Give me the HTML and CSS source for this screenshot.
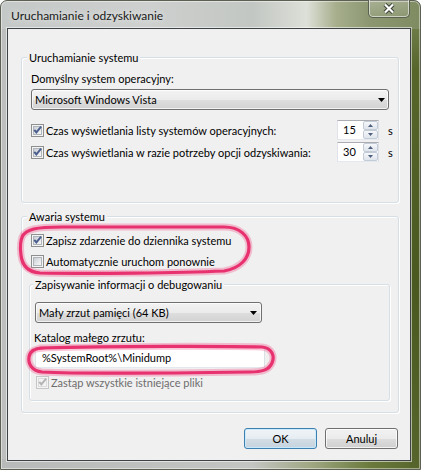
FILE: index.html
```html
<!DOCTYPE html>
<html lang="pl">
<head>
<meta charset="utf-8">
<title>Uruchamianie i odzyskiwanie</title>
<link rel="stylesheet" href="styles.css">
</head>
<body>
<div class="window">
  <div class="titlebar">
    <div class="title">Uruchamianie i odzyskiwanie</div>
    <div class="close">
      <svg width="12" height="11" viewBox="0 0 12 11"><path d="M2 1.5 L10 9.5 M10 1.5 L2 9.5" stroke="#3b4236" stroke-width="4.2"/><path d="M2 1.5 L10 9.5 M10 1.5 L2 9.5" stroke="#ffffff" stroke-width="2.2"/></svg>
    </div>
  </div>
  <div class="client">
    <div class="group g1">
      <div class="gtitle">Uruchamianie systemu</div>
      <div class="label l1">Domyślny system operacyjny:</div>
      <div class="combo c1"><span>Microsoft Windows Vista</span><svg width="7" height="4" viewBox="0 0 7 4"><path d="M0 0H7L3.5 4Z" fill="#000"/></svg></div>
      <div class="row r1">
        <div class="check"><span class="cb"><span class="cb-in"><svg width="9" height="9" viewBox="0 0 9 9"><path d="M0.5 4.6 L2 3.2 L3.4 4.8 L7.4 0 L8.8 1.3 L3.4 8 Z" fill="#4b5f8e"/></svg></span></span><span>Czas wyświetlania listy systemów operacyjnych:</span></div>
        <div class="spin"><span class="spin-val">15</span><span class="spin-btns"><span class="sb"><svg width="5" height="3" viewBox="0 0 5 3"><path d="M0 3L2.5 0L5 3Z" fill="#4f5f7d"/></svg></span><span class="sb"><svg width="5" height="3" viewBox="0 0 5 3"><path d="M0 0H5L2.5 3Z" fill="#4f5f7d"/></svg></span></span></div>
        <span class="unit">s</span>
      </div>
      <div class="row r2">
        <div class="check"><span class="cb"><span class="cb-in"><svg width="9" height="9" viewBox="0 0 9 9"><path d="M0.5 4.6 L2 3.2 L3.4 4.8 L7.4 0 L8.8 1.3 L3.4 8 Z" fill="#4b5f8e"/></svg></span></span><span>Czas wyświetlania w razie potrzeby opcji odzyskiwania:</span></div>
        <div class="spin"><span class="spin-val">30</span><span class="spin-btns"><span class="sb"><svg width="5" height="3" viewBox="0 0 5 3"><path d="M0 3L2.5 0L5 3Z" fill="#4f5f7d"/></svg></span><span class="sb"><svg width="5" height="3" viewBox="0 0 5 3"><path d="M0 0H5L2.5 3Z" fill="#4f5f7d"/></svg></span></span></div>
        <span class="unit">s</span>
      </div>
    </div>

    <div class="group g2">
      <div class="gtitle">Awaria systemu</div>
      <div class="row z1">
        <div class="check"><span class="cb"><span class="cb-in"><svg width="9" height="9" viewBox="0 0 9 9"><path d="M0.5 4.6 L2 3.2 L3.4 4.8 L7.4 0 L8.8 1.3 L3.4 8 Z" fill="#4b5f8e"/></svg></span></span><span>Zapisz zdarzenie do dziennika systemu</span></div>
      </div>
      <div class="row z2">
        <div class="check"><span class="cb"><span class="cb-in"></span></span><span>Automatycznie uruchom ponownie</span></div>
      </div>
      <div class="group g3">
        <div class="gtitle">Zapisywanie informacji o debugowaniu</div>
        <div class="combo c2"><span>Mały zrzut pamięci (64 KB)</span><svg width="7" height="4" viewBox="0 0 7 4"><path d="M0 0H7L3.5 4Z" fill="#000"/></svg></div>
        <div class="label l2">Katalog małego zrzutu:</div>
        <div class="textbox">%SystemRoot%\Minidump</div>
        <div class="row d1">
          <div class="check disabled"><span class="cb"><span class="cb-in"><svg width="9" height="9" viewBox="0 0 9 9"><path d="M0.5 4.6 L2 3.2 L3.4 4.8 L7.4 0 L8.8 1.3 L3.4 8 Z" fill="#b4b4b4"/></svg></span></span><span>Zastąp wszystkie istniejące pliki</span></div>
        </div>
      </div>
    </div>

    <div class="buttons">
      <button class="btn default">OK</button>
      <button class="btn">Anuluj</button>
    </div>
  </div>

  <svg class="marks" width="421" height="470" viewBox="0 0 421 470">
    <g fill="none" stroke-linecap="round" stroke-linejoin="round">
      <path class="glow" d="M22 237 C26 229 36 227 62 227 L224 227 C240 227 249 236 249 247 C249 258 241 268 224 271 C180 273 90 274 40 273 C28 272 22 265 21 255 C20 248 20 241 23 235"/>
      <path class="ink" d="M22 237 C26 229 36 227 62 227 L224 227 C240 227 249 236 249 247 C249 258 241 268 224 271 C180 273 90 274 40 273 C28 272 22 265 21 255 C20 248 20 241 23 235"/>
      <path class="glow" d="M40 348 C120 346 220 346 262 347 C272 348 275 356 272 363 C269 370 262 372 250 372 C180 373 80 374 42 372 C32 371 28 364 29 357 C30 351 34 348 46 348"/>
      <path class="ink" d="M40 348 C120 346 220 346 262 347 C272 348 275 356 272 363 C269 370 262 372 250 372 C180 373 80 374 42 372 C32 371 28 364 29 357 C30 351 34 348 46 348"/>
    </g>
  </svg>
</div>
</body>
</html>
```

FILE: styles.css
```css
html, body {
  margin: 0;
  padding: 0;
  background: #ffffff;
}

body {
  width: 421px;
  height: 470px;
  overflow: hidden;
  font-family: "Lato", "Segoe UI", "Noto Sans", sans-serif;
  font-size: 11px;
  line-height: 15px;
  color: #000;
}

.window {
  position: relative;
  width: 421px;
  height: 470px;
  box-sizing: border-box;
  border: 1px solid #5b6053;
  border-radius: 7px 7px 0 0;
  background:
    linear-gradient(to right, #c4c8c6 0%, #cdd0ce 35%, #c3c7c3 60%, #dde0d8 73%, #a6ae8c 80%, #8c9771 88%, #7f8b61 100%) top / 100% 28px no-repeat,
    linear-gradient(to bottom, #7c8959 0%, #56652a 15%, #4a5920 60%, #56652b 100%) right / 10px 100% no-repeat,
    linear-gradient(to right, #b7bab8 0%, #c2c5c2 60%, #9fa782 74%, #6b7a3c 88%, #56652a 100%) bottom / 100% 10px no-repeat,
    #bcbfbd;
  box-shadow: inset 0 0 0 1px rgba(255, 255, 255, 0.45);
}

.titlebar {
  height: 27px;
  display: flex;
  align-items: flex-start;
}

.title {
  padding: 7px 0 0 10px;
  font-size: 12px;
  color: #1a1a1a;
  text-shadow: 0 0 6px rgba(255, 255, 255, 0.9);
}

.close {
  margin-left: auto;
  margin-right: 10px;
  margin-top: -2px;
  width: 42px;
  height: 19px;
  box-sizing: border-box;
  border: 1px solid #5a6150;
  border-top: none;
  border-radius: 0 0 5px 5px;
  background: linear-gradient(to bottom, rgba(255,255,255,0.25), rgba(255,255,255,0.08));
  box-shadow: inset 0 0 0 1px rgba(255, 255, 255, 0.55);
  display: flex;
  align-items: center;
  justify-content: center;
  padding-top: 1px;
}

.client {
  margin: 0 9px 0 6px;
  height: 433px;
  box-sizing: border-box;
  border: 1px solid #3d4244;
  background: #f0f0f0;
  box-shadow: 0 0 0 1px rgba(255, 255, 255, 0.55);
  padding-top: 28px;
}

.group {
  border: 1px solid #d5dfe5;
  border-radius: 3px;
  box-shadow: inset 1px 1px 0 #ffffff, 1px 1px 0 #ffffff;
}

.gtitle {
  margin-top: -8px;
  width: max-content;
  padding: 0 2px;
  background: #f0f0f0;
  line-height: 15px;
}

.g1 {
  margin: 0 11px 0 13px;
  padding: 0 9px 40px 9px;
}
.g1 > .gtitle { margin-left: -4px; }

.l1 { margin-top: 6px; }

.combo {
  height: 21px;
  box-sizing: border-box;
  border: 1px solid #707070;
  border-radius: 3px;
  background: linear-gradient(to bottom, #f3f3f3 0%, #ebebeb 50%, #dedede 51%, #d2d2d2 100%);
  box-shadow: inset 0 0 0 1px rgba(255,255,255,0.7);
  display: flex;
  align-items: center;
  justify-content: space-between;
  padding: 0 3px 0 3px;
}

.c1 { margin-top: 3px; }

.row {
  height: 20px;
  display: flex;
  align-items: center;
}

.r1 { margin-top: 10px; margin-right: -8px; }
.r2 { margin-top: 2px; margin-right: -8px; }

.check {
  flex: 1;
  display: flex;
  align-items: center;
  gap: 2px;
  white-space: nowrap;
}

.cb {
  width: 13px;
  height: 13px;
  box-sizing: border-box;
  border: 1px solid #8e8f8f;
  background: #f4f4f4;
  padding: 1px;
  flex: none;
}

.cb-in {
  display: block;
  width: 9px;
  height: 9px;
  box-sizing: border-box;
  border: 1px solid #b0b5bb;
  background: linear-gradient(135deg, #c9cdd3 0%, #e6e8ea 60%, #f8f8f8 100%);
}

.cb-in svg {
  display: block;
  margin: -1px 0 0 -1px;
  overflow: visible;
}

.disabled { color: #6d6d6d; }
.disabled .cb { border-color: #c6c6c6; background: #f4f4f4; }
.disabled .cb-in { border-color: #dcdcdc; background: #f4f4f4; }

.spin {
  width: 42px;
  height: 20px;
  box-sizing: border-box;
  border: 1px solid;
  border-color: #abadb3 #dbdfe6 #e3e9ef #e2e3ea;
  background: #fff;
  display: flex;
  flex: none;
}

.spin-val {
  flex: 1;
  padding-left: 5px;
  line-height: 18px;
}

.spin-btns {
  width: 15px;
  display: flex;
  flex-direction: column;
}

.sb {
  flex: 1;
  box-sizing: border-box;
  border: 1px solid #c3cbd6;
  border-radius: 2px;
  background: linear-gradient(to bottom, #f5f7fa, #dfe5ec);
  display: flex;
  align-items: center;
  justify-content: center;
}

.unit {
  width: 9px;
  margin-left: 9px;
  flex: none;
}

.g2 {
  margin: 13px 11px 0 13px;
  padding: 0 8px 11px 7px;
}
.g2 > .gtitle { margin-left: -2px; }

.z1 { margin-top: 6px; margin-left: 2px; }
.z2 { margin-top: 1px; margin-left: 2px; }

.g3 {
  margin-top: 13px;
  padding: 0 0 8px 5px;
}
.g3 > .gtitle { margin-left: -2px; }

.c2 {
  margin-top: 10px;
  width: 227px;
  padding-right: 4px;
}

.l2 {
  margin-top: 7px;
  margin-left: -1px;
}

.textbox {
  margin-top: 2px;
  width: 230px;
  height: 21px;
  box-sizing: border-box;
  border: 1px solid;
  border-color: #abadb3 #dbdfe6 #e3e9ef #e2e3ea;
  background: #fff;
  padding-left: 6px;
  line-height: 19px;
}

.d1 { margin-top: 4px; margin-left: 1px; }

.buttons {
  margin-top: 15px;
  margin-right: 12px;
  display: flex;
  justify-content: flex-end;
  gap: 8px;
}

.btn {
  width: 73px;
  height: 21px;
  box-sizing: border-box;
  border: 1px solid #707070;
  border-radius: 3px;
  background: linear-gradient(to bottom, #f2f2f2 0%, #ebebeb 50%, #dddddd 51%, #cfcfcf 100%);
  box-shadow: inset 0 0 0 1px rgba(255,255,255,0.75);
  font: inherit;
  color: #000;
  padding: 0;
}

.btn.default {
  border-color: #3c7fb1;
  background: linear-gradient(to bottom, #f0f4f7 0%, #e6edf2 50%, #d3dde5 51%, #c6d3de 100%);
  box-shadow: inset 0 0 0 1px rgba(200, 235, 252, 0.9);
}

.marks {
  position: absolute;
  left: -1px;
  top: -1px;
  pointer-events: none;
}

.marks .glow {
  stroke: rgba(240, 90, 140, 0.35);
  stroke-width: 7;
}

.marks .ink {
  stroke: #e8316f;
  stroke-width: 3.2;
}
```
